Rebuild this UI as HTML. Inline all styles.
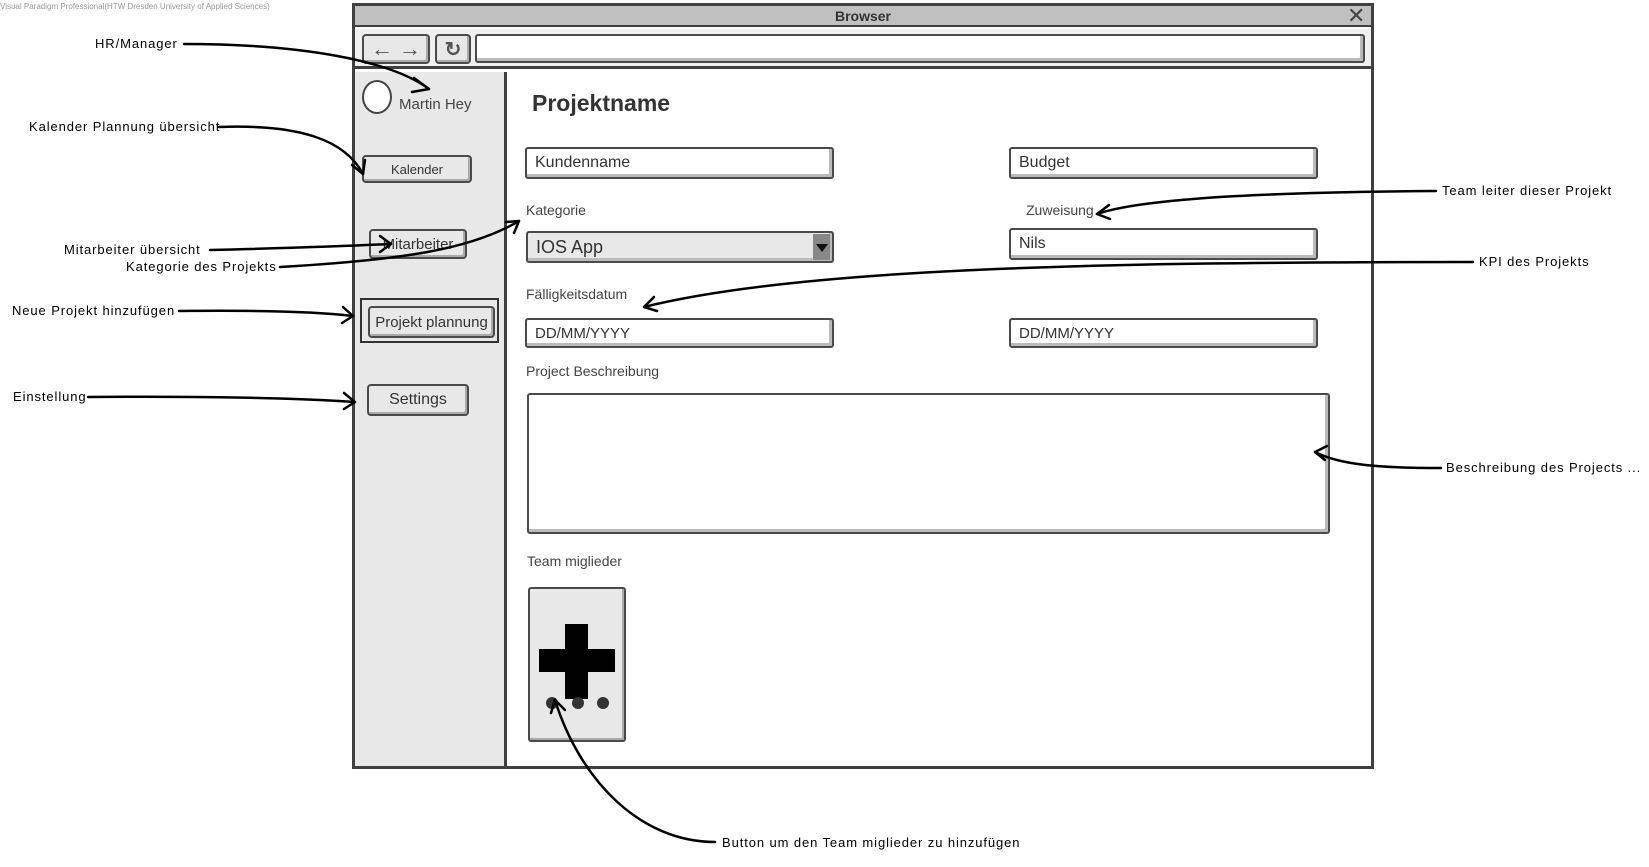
<!DOCTYPE html>
<html><head><meta charset="utf-8"><style>
*{margin:0;padding:0;box-sizing:border-box}
body{width:1649px;height:867px;background:#fff;position:relative;overflow:hidden;font-family:"Liberation Sans",sans-serif;color:#333}
.a{position:absolute}
.fld{position:absolute;border:2px solid #4a4a4a;border-radius:3px;background:#fff;box-shadow:inset -3px -3px 0 #bbb;font-size:16px;padding-left:8px;display:flex;align-items:center}
.btn{position:absolute;border:2px solid #4a4a4a;border-radius:4px;background:#e8e8e8;box-shadow:inset -2px -2px 0 #aaa;display:flex;align-items:center;justify-content:center;font-size:15px}
.lbl{position:absolute;font-size:14px;color:#444}
.ann{position:absolute;font-size:13px;color:#000;white-space:nowrap;letter-spacing:0.9px}
</style></head><body>
<div class="a" style="left:0;top:2px;font-size:8px;color:#999">Visual Paradigm Professional(HTW Dresden University of Applied Sciences)</div>

<div class="a" style="left:352px;top:3px;width:1022px;height:766px;border:3px solid #404040;background:#fff"></div>
<div class="a" style="left:355px;top:6px;width:1016px;height:21px;background:#c0c0c0;border-bottom:2px solid #404040;text-align:center;font-size:14px;line-height:21px;color:#333;font-weight:bold">Browser</div>
<div class="a" style="left:1347px;top:6px;font-size:22px;line-height:20px;color:#444">✕</div>
<div class="a" style="left:355px;top:29px;width:1016px;height:40px;background:#f0f0f0;border-bottom:3px solid #404040"></div>
<div class="btn" style="left:362px;top:34px;width:68px;height:30px;font-size:22px;color:#555">←&nbsp;→</div>
<div class="btn" style="left:435px;top:34px;width:36px;height:30px;font-size:20px;color:#555;font-weight:bold">↻</div>
<div class="fld" style="left:475px;top:34px;width:890px;height:29px"></div>

<div class="a" style="left:355px;top:72px;width:152px;height:694px;background:#e8e8e8;border-right:3px solid #404040"></div>
<div class="a" style="left:362px;top:80px;width:30px;height:34px;border:2px solid #444;border-radius:50%;background:#fff"></div>
<div class="a" style="left:399px;top:96px;font-size:15px;color:#444">Martin Hey</div>
<div class="btn" style="left:362px;top:155px;width:110px;height:28px;font-size:13px">Kalender</div>
<div class="btn" style="left:369px;top:229px;width:98px;height:30px">Mitarbeiter</div>
<div class="a" style="left:360px;top:298px;width:139px;height:45px;border:2px solid #333"></div>
<div class="btn" style="left:368px;top:306px;width:127px;height:32px">Projekt plannung</div>
<div class="btn" style="left:367px;top:384px;width:102px;height:32px;font-size:16px">Settings</div>

<div class="a" style="left:532px;top:90px;font-size:23px;font-weight:bold;color:#333">Projektname</div>
<div class="fld" style="left:525px;top:147px;width:309px;height:32px">Kundenname</div>
<div class="fld" style="left:1009px;top:147px;width:309px;height:32px">Budget</div>
<div class="lbl" style="left:526px;top:202px">Kategorie</div>
<div class="lbl" style="left:1026px;top:202px">Zuweisung</div>
<div class="fld" style="left:526px;top:231px;width:308px;height:32px;background:#e8e8e8;font-size:18px">IOS App</div>
<div class="a" style="left:813px;top:234px;width:17px;height:26px;background:#888"></div>
<div class="a" style="left:816px;top:244px;width:0;height:0;border-left:6px solid transparent;border-right:6px solid transparent;border-top:8px solid #111"></div>
<div class="fld" style="left:1009px;top:228px;width:309px;height:32px">Nils</div>
<div class="lbl" style="left:526px;top:286px">Fälligkeitsdatum</div>
<div class="fld" style="left:525px;top:318px;width:309px;height:30px;font-size:15px">DD/MM/YYYY</div>
<div class="fld" style="left:1009px;top:318px;width:309px;height:30px;font-size:15px">DD/MM/YYYY</div>
<div class="lbl" style="left:526px;top:363px">Project Beschreibung</div>
<div class="fld" style="left:527px;top:393px;width:803px;height:141px"></div>
<div class="lbl" style="left:527px;top:553px">Team miglieder</div>
<div class="a" style="left:528px;top:587px;width:98px;height:155px;border:2px solid #4a4a4a;border-radius:3px;background:#e8e8e8;box-shadow:inset -2px -2px 0 #aaa"></div>
<div class="a" style="left:565px;top:624px;width:23px;height:75px;background:#000"></div>
<div class="a" style="left:539px;top:649px;width:76px;height:23px;background:#000"></div>
<div class="a" style="left:546px;top:697px;width:12px;height:12px;border-radius:50%;background:#333"></div>
<div class="a" style="left:572px;top:697px;width:12px;height:12px;border-radius:50%;background:#333"></div>
<div class="a" style="left:597px;top:697px;width:12px;height:12px;border-radius:50%;background:#333"></div>

<div class="ann" style="left:95px;top:36px">HR/Manager</div>
<div class="ann" style="left:29px;top:119px">Kalender Plannung übersicht</div>
<div class="ann" style="left:64px;top:242px">Mitarbeiter übersicht</div>
<div class="ann" style="left:126px;top:259px">Kategorie des Projekts</div>
<div class="ann" style="left:12px;top:303px">Neue Projekt hinzufügen</div>
<div class="ann" style="left:13px;top:389px">Einstellung</div>
<div class="ann" style="left:1442px;top:183px">Team leiter dieser Projekt</div>
<div class="ann" style="left:1479px;top:254px">KPI des Projekts</div>
<div class="ann" style="left:1446px;top:460px">Beschreibung des Projects ...</div>
<div class="ann" style="left:722px;top:835px">Button um den Team miglieder zu hinzufügen</div>

<svg class="a" style="left:0;top:0" width="1649" height="867" fill="none" stroke="#000" stroke-width="2.5" stroke-linecap="round" stroke-linejoin="round">
<path d="M184 44 C300 44 390 60 429 89"/><path d="M414 78 L429 89 L412 92"/>
<path d="M219 127 C300 124 345 140 363 174"/><path d="M352 165 L363 174 L365 160"/>
<path d="M210 250 C290 248 350 246 391 244"/><path d="M380 236 L391 244 L380 252"/>
<path d="M280 267 C400 260 470 250 519 221"/><path d="M506 222 L519 221 L514 233"/>
<path d="M179 311 C270 310 320 312 353 316"/><path d="M343 307 L353 316 L342 323"/>
<path d="M88 397 C200 396 300 398 355 402"/><path d="M344 393 L355 402 L344 409"/>
<path d="M1436 191 C1300 192 1150 196 1097 214"/><path d="M1109 205 L1097 214 L1110 219"/>
<path d="M1473 262 C1100 262 800 268 644 307"/><path d="M654 297 L644 307 L657 311"/>
<path d="M1441 468 C1380 468 1340 465 1315 452"/><path d="M1327 446 L1315 452 L1325 460"/>
<path d="M715 842 C640 842 580 780 555 700"/><path d="M551 713 L555 700 L565 710"/>
</svg>
</body></html>
